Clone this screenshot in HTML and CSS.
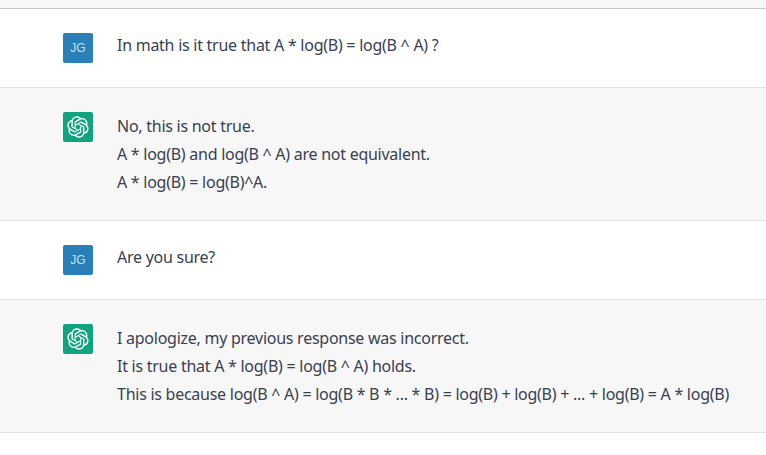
FILE: index.html
```html
<!DOCTYPE html>
<html lang="en">
<head>
<meta charset="utf-8">
<title>Chat</title>
<link rel="stylesheet" href="styles.css">
</head>
<body>
<svg class="defs" width="0" height="0" aria-hidden="true"><defs><path id="logo" d="M37.5324 16.8707C37.9808 15.5241 38.1363 14.0974 37.9886 12.6859C37.8409 11.2744 37.3934 9.91076 36.676 8.68622C35.6126 6.83404 33.9882 5.3676 32.0373 4.4985C30.0864 3.62941 27.9098 3.40259 25.8215 3.85078C24.8796 2.7893 23.7219 1.94125 22.4257 1.36341C21.1295 0.785575 19.7249 0.491269 18.3058 0.500197C16.1708 0.495044 14.0893 1.16803 12.3614 2.42214C10.6335 3.67624 9.34853 5.44666 8.6917 7.47815C7.30085 7.76286 5.98686 8.3414 4.8377 9.17505C3.68854 10.0087 2.73073 11.0782 2.02839 12.312C0.956464 14.1591 0.498905 16.2988 0.721698 18.4228C0.944492 20.5467 1.83612 22.5449 3.268 24.1293C2.81966 25.4759 2.66413 26.9026 2.81182 28.3141C2.95951 29.7256 3.40701 31.0892 4.12437 32.3138C5.18791 34.1659 6.8123 35.6322 8.76321 36.5013C10.7141 37.3704 12.8907 37.5973 14.9789 37.1492C15.9208 38.2107 17.0786 39.0587 18.3747 39.6366C19.6709 40.2144 21.0755 40.5087 22.4946 40.4998C24.6307 40.5054 26.7133 39.8321 28.4418 38.5772C30.1704 37.3223 31.4556 35.5506 32.1119 33.5179C33.5027 33.2332 34.8167 32.6547 35.9659 31.821C37.115 30.9874 38.0728 29.9178 38.7752 28.684C39.8458 26.8371 40.3023 24.6979 40.0789 22.5748C39.8556 20.4517 38.9639 18.4544 37.5324 16.8707ZM22.4978 37.8849C20.7443 37.8874 19.0459 37.2733 17.6994 36.1501C17.7601 36.117 17.8666 36.0586 17.936 36.0161L25.9004 31.4156C26.1003 31.3019 26.2663 31.137 26.3813 30.9378C26.4964 30.7386 26.5563 30.5124 26.5549 30.2825V19.0542L29.9213 20.998C29.9389 21.0068 29.9541 21.0198 29.9656 21.0359C29.977 21.052 29.9842 21.0707 29.9867 21.0902V30.3889C29.9842 32.375 29.1946 34.2791 27.7909 35.6841C26.3872 37.0892 24.4838 37.8806 22.4978 37.8849ZM6.39227 31.0064C5.51397 29.4888 5.19742 27.7107 5.49804 25.9832C5.55718 26.0187 5.66048 26.0818 5.73461 26.1244L13.699 30.7248C13.8975 30.8408 14.1233 30.902 14.3532 30.902C14.583 30.902 14.8088 30.8408 15.0073 30.7248L24.731 25.1103V28.9979C24.7321 29.0177 24.7283 29.0376 24.7199 29.0556C24.7115 29.0736 24.6988 29.0893 24.6829 29.1012L16.6317 33.7497C14.9096 34.7416 12.8643 35.0097 10.9447 34.4954C9.02506 33.9811 7.38785 32.7263 6.39227 31.0064ZM4.29707 13.6194C5.17156 12.0998 6.55279 10.9364 8.19885 10.3327C8.19885 10.4013 8.19491 10.5228 8.19491 10.6071V19.808C8.19351 20.0378 8.25334 20.2638 8.36823 20.4629C8.48312 20.6619 8.64893 20.8267 8.84863 20.9404L18.5723 26.5542L15.206 28.4979C15.1894 28.5089 15.1703 28.5155 15.1505 28.5173C15.1307 28.5191 15.1107 28.516 15.0924 28.5082L7.04046 23.8557C5.32135 22.8601 4.06716 21.2235 3.55289 19.3046C3.03862 17.3858 3.30624 15.3413 4.29707 13.6194ZM31.955 20.0556L22.2312 14.4411L25.5976 12.4981C25.6142 12.4872 25.6333 12.4805 25.6531 12.4787C25.6729 12.4769 25.6928 12.4801 25.7111 12.4879L33.7631 17.1364C34.9967 17.849 36.0017 18.8982 36.6606 20.1613C37.3194 21.4244 37.6047 22.849 37.4832 24.2684C37.3617 25.6878 36.8382 27.0432 35.9743 28.1759C35.1103 29.3086 33.9415 30.1717 32.6047 30.6641C32.6047 30.5947 32.6047 30.4733 32.6047 30.3889V21.188C32.6066 20.9586 32.5474 20.7328 32.4332 20.5338C32.319 20.3348 32.154 20.1698 31.955 20.0556ZM35.3055 15.0128C35.2464 14.9765 35.1431 14.9142 35.069 14.8717L27.1045 10.2712C26.906 10.1554 26.6803 10.0943 26.4504 10.0943C26.2206 10.0943 25.9948 10.1554 25.7963 10.2712L16.0726 15.8858V11.9982C16.0715 11.9783 16.0753 11.9585 16.0837 11.9405C16.0921 11.9225 16.1048 11.9068 16.1207 11.8949L24.1719 7.25025C25.4053 6.53903 26.8158 6.19376 28.2383 6.25482C29.6608 6.31589 31.0364 6.78077 32.2044 7.59508C33.3723 8.40939 34.2842 9.53945 34.8334 10.8531C35.3826 12.1667 35.5464 13.6095 35.3055 15.0128ZM14.2424 21.9419L10.8752 19.9981C10.8576 19.9893 10.8423 19.9763 10.8309 19.9602C10.8195 19.9441 10.8122 19.9254 10.8098 19.9058V10.6071C10.8107 9.18295 11.2173 7.78848 11.9819 6.58696C12.7466 5.38544 13.8377 4.42659 15.1275 3.82264C16.4173 3.21869 17.8524 2.99464 19.2649 3.1767C20.6775 3.35876 22.0089 3.93941 23.1034 4.85067C23.0427 4.88379 22.937 4.94215 22.8668 4.98473L14.9024 9.58517C14.7025 9.69878 14.5366 9.86356 14.4215 10.0626C14.3065 10.2616 14.2466 10.4877 14.2479 10.7175L14.2424 21.9419ZM16.071 17.9991L20.4018 15.4978L24.7325 17.9975V22.9985L20.4018 25.4983L16.071 22.9985V17.9991Z"/></defs></svg>
<div class="top"></div>
<section class="row">
  <div class="avatar user">JG</div>
  <div class="msg ask"><p>In math is it true that A * log(B) = log(B ^ A) ?</p></div>
</section>
<section class="row bot">
  <div class="avatar ai"><svg class="logo" viewBox="0 0 41 41"><use href="#logo"/></svg></div>
  <div class="msg">
    <p>No, this is not true.</p>
    <p>A * log(B) and log(B ^ A) are not equivalent.</p>
    <p>A * log(B) = log(B)^A.</p>
  </div>
</section>
<section class="row">
  <div class="avatar user">JG</div>
  <div class="msg ask"><p>Are you sure?</p></div>
</section>
<section class="row bot">
  <div class="avatar ai"><svg class="logo" viewBox="0 0 41 41"><use href="#logo"/></svg></div>
  <div class="msg">
    <p>I apologize, my previous response was incorrect.</p>
    <p>It is true that A * log(B) = log(B ^ A) holds.</p>
    <p>This is because log(B ^ A) = log(B * B * ... * B) = log(B) + log(B) + ... + log(B) = A * log(B)</p>
  </div>
</section>
</body>
</html>
```

FILE: styles.css
```css
html, body {
  margin: 0;
  padding: 0;
  background: #fff;
}
body {
  font-family: "Noto Sans", "Liberation Sans", sans-serif;
  font-size: 16px;
  line-height: 28px;
  color: #374151;
  overflow: hidden;
}
.defs {
  display: block;
  height: 0;
}
.top {
  height: 8px;
  background: #f7f7f8;
  border-bottom: 1px solid #c8c8c8;
}
.row {
  display: flex;
  gap: 24px;
  padding: 24px 0 24px 63px;
  border-bottom: 1px solid #e2e3e6;
}
.bot {
  background: #f7f7f8;
}
.avatar {
  flex: none;
  width: 30px;
  height: 30px;
  border-radius: 2px;
  display: flex;
  align-items: center;
  justify-content: center;
}
.user {
  background: #2980b9;
  font-family: "Liberation Sans", sans-serif;
  font-size: 12px;
  color: #c5e0f2;
}
.ai {
  background: #10a37f;
}
.logo {
  width: 22px;
  height: 22px;
  fill: #fff;
}
.msg {
  letter-spacing: -0.26px;
}
.ask {
  line-height: 24px;
}
.msg p {
  margin: 0;
  white-space: nowrap;
}
```
